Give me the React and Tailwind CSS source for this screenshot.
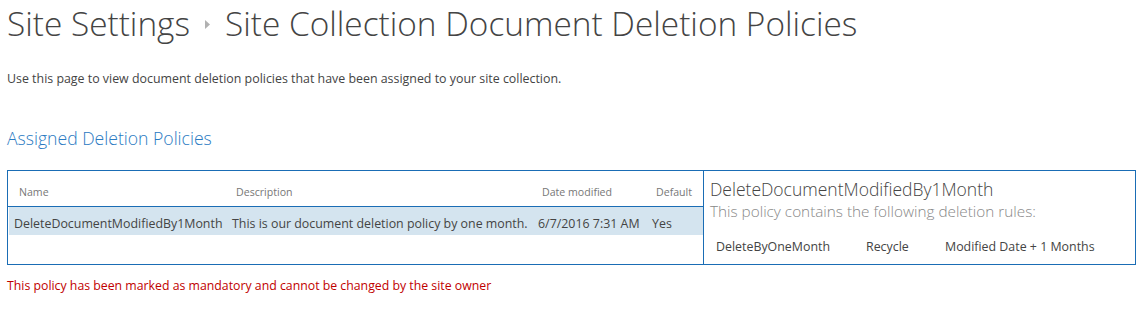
const policies = [
  {
    name: 'DeleteDocumentModifiedBy1Month',
    description: 'This is our document deletion policy by one month.',
    modified: '6/7/2016 7:31 AM',
    isDefault: 'Yes',
  },
];

const rules = [{ name: 'DeleteByOneMonth', action: 'Recycle', when: 'Modified Date + 1 Months' }];

const cols = 'grid grid-cols-[218px_306px_114px_1fr]';

export default function App() {
  return (
    <div className="min-h-screen bg-white font-['Open_Sans',sans-serif] text-[#444] pl-[7px]">
      {/* Page title */}
      <h1 className="flex items-center pt-[3px] text-[33.4px] font-light leading-[40px] text-[#444]">
        <span>Site Settings</span>
        <svg className="ml-[15px] mr-[15px] mt-[3px]" width="5" height="9" viewBox="0 0 5 9">
          <path d="M0 0 L5 4.5 L0 9 Z" fill="#b1b1b1" />
        </svg>
        <span>Site Collection Document Deletion Policies</span>
      </h1>

      <p className="mt-[28px] text-[12.4px] leading-[16px]">
        Use this page to view document deletion policies that have been assigned to your site collection.
      </p>

      <h2 className="mt-[39px] text-[17.6px] font-light leading-[24px] text-[#2a7ac2]">Assigned Deletion Policies</h2>

      {/* Policies table + detail panel (borders take the blue currentColor) */}
      <div className="mt-[20px] flex h-[95px] w-[1129px] border border-[#1a6db5] text-[#1a6db5]">
        <div className="w-[696px] border-r border-[#1a6db5]">
          <div className={`${cols} h-[36px] items-center border-b border-[#1a6db5] pt-[8px] text-[10.6px]`}>
            <span className="pl-[11px] text-[#777]">Name</span>
            <span className="pl-[10px] text-[#777]">Description</span>
            <span className="pl-[10px] text-[#777]">Date modified</span>
            <span className="pl-[10px] text-[#777]">Default</span>
          </div>
          {policies.map((p) => (
            <div
              key={p.name}
              className={`${cols} ml-px h-[28px] items-center bg-[#d4e4ef] pt-[7px] text-[12.4px] text-[#444]`}
            >
              <span className="pl-[5px]">{p.name}</span>
              <span className="pl-[5px]">{p.description}</span>
              <span className="pl-[5px]">{p.modified}</span>
              <span className="pl-[5px]">{p.isDefault}</span>
            </div>
          ))}
        </div>

        <div className="flex-1 pl-[6px] pt-[7px]">
          <div className="text-[17.5px] font-light leading-[22px] text-[#444]">DeleteDocumentModifiedBy1Month</div>
          <div className="text-[15.3px] font-light leading-[22px] text-[#888]">
            This policy contains the following deletion rules:
          </div>
          {rules.map((r) => (
            <div
              key={r.name}
              className="mt-[17px] grid grid-cols-[150px_79px_1fr] pl-[6px] text-[12.4px] leading-[16px] text-[#444]"
            >
              <span>{r.name}</span>
              <span>{r.action}</span>
              <span>{r.when}</span>
            </div>
          ))}
        </div>
      </div>

      <p className="mt-[13px] text-[12.3px] leading-[16px] text-[#bf0000]">
        This policy has been marked as mandatory and cannot be changed by the site owner
      </p>
    </div>
  );
}
